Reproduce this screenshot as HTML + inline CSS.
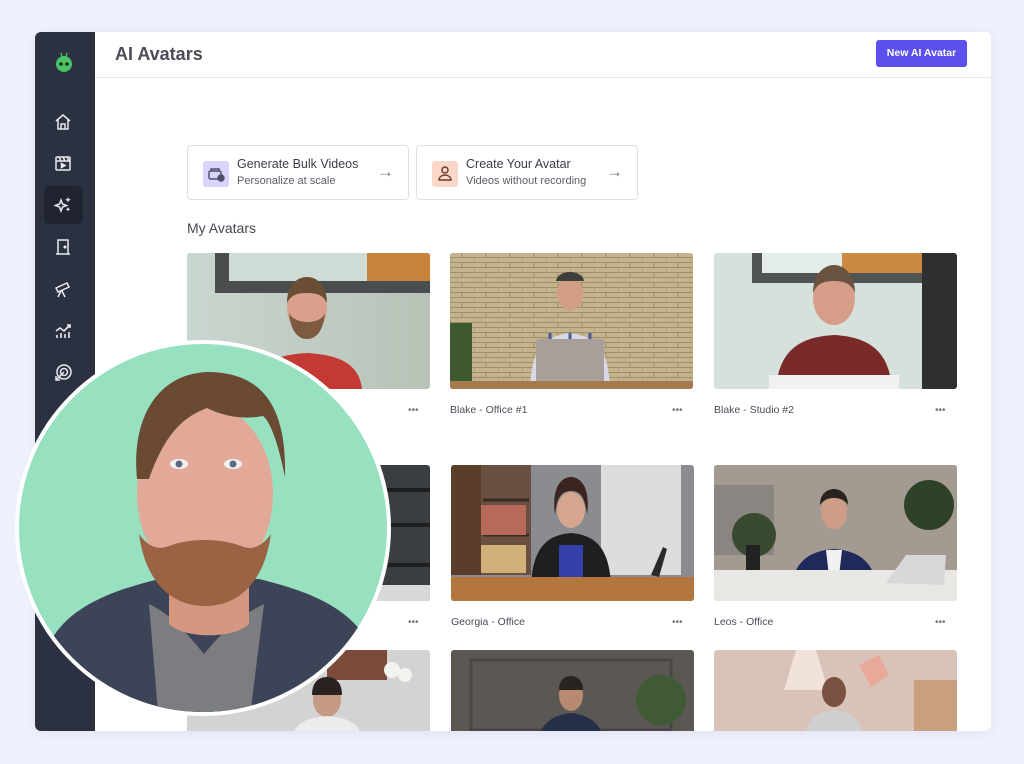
<!DOCTYPE html>
<html><head><meta charset="utf-8"><style>
*{margin:0;padding:0;box-sizing:border-box}
body{width:1024px;height:764px;background:#eef0fb;font-family:"Liberation Sans",sans-serif;position:relative;overflow:hidden}
.card{position:absolute;left:35px;top:32px;width:956px;height:699px;background:#fff;border-radius:6px;overflow:hidden;box-shadow:0 2px 10px rgba(80,90,140,.08)}
.side{position:absolute;left:0;top:0;width:60px;height:100%;background:#2b3140}
.hdr{position:absolute;left:60px;top:0;right:0;height:46px;border-bottom:1px solid #e6e7ec}
.hdr h1{position:absolute;left:20px;top:12px;font-size:18px;font-weight:bold;color:#4a4d57}
.btn{position:absolute;right:24px;top:8px;width:91px;height:27px;background:#5b4fee;border-radius:3px;color:#fff;font-size:10.5px;font-weight:bold;text-align:center;line-height:27px}
.ic{position:absolute;left:18px;width:20px;height:20px}
.act{position:absolute;left:9px;top:154px;width:39px;height:38px;background:#1f2430;border-radius:5px}
.qa{position:absolute;top:113px;width:222px;height:55px;border:1px solid #dfe0e6;border-radius:4px;background:#fff}
.qa .b{position:absolute;left:15px;top:15px;width:26px;height:26px;border-radius:3px}
.qa .t{position:absolute;left:49px;top:11px;font-size:12.5px;color:#3b3e48}
.qa .s{position:absolute;left:49px;top:29px;font-size:11px;color:#5b5e68}
.qa .ar{position:absolute;right:14px;top:16px;font-size:17px;color:#777}
.my{position:absolute;left:152px;top:188px;font-size:14px;color:#44474f}
.th{position:absolute;width:243px;height:136px;border-radius:3px;overflow:hidden}
.lb{position:absolute;font-size:10.5px;color:#4a4d57}
.dots{position:absolute;font-size:10px;color:#777;letter-spacing:0px}
.circ{position:absolute;left:15px;top:340px;width:376px;height:376px;border-radius:50%;background:#fff;padding:4px}
.circ>div{width:100%;height:100%;border-radius:50%;background:#97e1c1;overflow:hidden;position:relative}
</style></head><body>
<div class="card">
 <div class="side">
  <svg class="ic" style="left:17px;top:19px;width:24px;height:24px" viewBox="0 0 24 24"><line x1="9" y1="2" x2="10" y2="6" stroke="#4cc265" stroke-width="1.5"/><line x1="15" y1="2" x2="14" y2="6" stroke="#4cc265" stroke-width="1.5"/><circle cx="12" cy="13" r="8" fill="#49c463"/><circle cx="9" cy="13" r="1.8" fill="#222"/><circle cx="15" cy="13" r="1.8" fill="#222"/></svg>
  <svg class="ic" style="top:80px" viewBox="0 0 20 20" fill="none" stroke="#e8eaf0" stroke-width="1.5"><path d="M3 9l7-6 7 6M5 8v9h10V8M8 17v-5h4v5"/></svg>
  <svg class="ic" style="top:121px" viewBox="0 0 20 20" fill="none" stroke="#e8eaf0" stroke-width="1.5"><rect x="3" y="4" width="14" height="13" rx="1"/><line x1="3" y1="8" x2="17" y2="8"/><path d="M6 4l2 4M10 4l2 4M14 4l2 4"/><path d="M8.5 10.5v4l3.5-2z" fill="#e8eaf0"/></svg>
  <div class="act"></div>
  <svg class="ic" style="top:163px" viewBox="0 0 20 20" fill="#e8eaf0"><path d="M8 5l1.5 4 4 1.5-4 1.5L8 16l-1.5-4-4-1.5 4-1.5z" fill="none" stroke="#e8eaf0" stroke-width="1.5"/><path d="M15 2l.8 2 2 .8-2 .8-.8 2-.8-2-2-.8 2-.8zM15 12l.7 1.6 1.6.7-1.6.7-.7 1.6-.7-1.6-1.6-.7 1.6-.7z"/></svg>
  <svg class="ic" style="top:205px" viewBox="0 0 20 20" fill="none" stroke="#e8eaf0" stroke-width="1.5"><path d="M5 17V3h10v14M3 17h14"/><circle cx="12" cy="10" r=".8" fill="#e8eaf0"/></svg>
  <svg class="ic" style="top:247px" viewBox="0 0 20 20" fill="none" stroke="#e8eaf0" stroke-width="1.5"><path d="M3 9l11-5 2 4-11 5zM8 12l-3 6M9 12l3 6"/></svg>
  <svg class="ic" style="top:289px" viewBox="0 0 20 20" fill="none" stroke="#e8eaf0" stroke-width="1.6"><path d="M3 10l4-3 4 3 6-6M14 4h3v3M4 17v-3M8 17v-5M12 17v-4M16 17v-6"/></svg>
  <svg class="ic" style="top:331px" viewBox="0 0 20 20" fill="none" stroke="#e8eaf0" stroke-width="1.5"><circle cx="11" cy="9" r="7"/><circle cx="11" cy="9" r="3.5"/><path d="M11 9L3 17M3 13v4h4"/></svg>
 </div>
 <div class="hdr"><h1>AI Avatars</h1><div class="btn">New AI Avatar</div></div>
 <div class="qa" style="left:152px"><div class="b" style="background:#d9d4fb"><svg width="26" height="26" viewBox="0 0 26 26" fill="none" stroke="#4a4f6a" stroke-width="1.4"><rect x="6" y="10" width="12" height="8" rx="1.5"/><path d="M8 10V8h8v2"/><circle cx="18" cy="17" r="3" fill="#4a4f6a"/></svg></div><div class="t">Generate Bulk Videos</div><div class="s">Personalize at scale</div><div class="ar">→</div></div>
 <div class="qa" style="left:381px"><div class="b" style="background:#fbd7c8"><svg width="26" height="26" viewBox="0 0 26 26" fill="none" stroke="#6a3a2c" stroke-width="1.4"><circle cx="13" cy="9" r="3"/><path d="M7 19c0-3 3-5 6-5s6 2 6 5z"/></svg></div><div class="t">Create Your Avatar</div><div class="s">Videos without recording</div><div class="ar">→</div></div>
 <div class="my">My Avatars</div>

 <div class="th" style="left:152px;top:221px;background:linear-gradient(90deg,#c9d6cf,#b8c2b7)"><svg width="243" height="136"><rect x="28" y="0" width="215" height="40" fill="#4a4d4e"/><rect x="42" y="0" width="138" height="28" fill="#cfdcd6"/><rect x="180" y="0" width="63" height="28" fill="#c9823a"/><path d="M65 136c3-25 22-34 55-36 33 2 52 11 55 36z" fill="#c23a33"/><ellipse cx="120" cy="55" rx="20" ry="26" fill="#d9a08e"/><path d="M100 50c0-18 10-26 20-26s20 8 20 26c-4-8-10-10-20-10s-16 2-20 10z" fill="#6b4e36"/><path d="M102 60c2 20 10 26 18 26s16-6 18-26c-4 12-30 12-36 0z" fill="#7d5a40"/></svg></div>
 <div class="th" style="left:415px;top:221px;background:#b8a883"><svg width="243" height="136"><defs><pattern id="br" width="24" height="10" patternUnits="userSpaceOnUse"><rect width="24" height="10" fill="#c4b48e"/><path d="M0 9.5h24M12 0v5M0 5v5M0 4.5h24" stroke="#9e8e6a" stroke-width="1"/></pattern></defs><rect width="243" height="136" fill="url(#br)"/><rect x="0" y="70" width="22" height="66" fill="#3f5a30"/><path d="M80 136c2-45 15-52 40-56 25 4 38 11 40 56z" fill="#d8d8e6"/><path d="M90 90h60M88 105h64M100 80v56M120 80v56M140 80v56" stroke="#4a5a9a" stroke-width="3"/><ellipse cx="120" cy="40" rx="13" ry="17" fill="#d29e86"/><path d="M106 28c2-12 26-12 28 0z" fill="#3e3e3a"/><rect x="86" y="86" width="68" height="46" rx="3" fill="#a89e9a"/><rect x="0" y="128" width="243" height="8" fill="#a57a4e"/></svg></div>
 <div class="th" style="left:679px;top:221px;background:#d6e1dc"><svg width="243" height="136"><rect x="38" y="0" width="170" height="30" fill="#505455"/><rect x="48" y="0" width="80" height="20" fill="#e3ece8"/><rect x="128" y="0" width="80" height="20" fill="#cc8a40"/><rect x="208" y="0" width="35" height="136" fill="#2e2f30"/><path d="M62 136c3-40 25-52 58-54 33 2 55 14 58 54z" fill="#7a2a28"/><ellipse cx="120" cy="45" rx="21" ry="27" fill="#d69d8a"/><path d="M99 40c0-20 12-28 21-28s21 8 21 28c-4-10-12-12-21-12s-17 2-21 12z" fill="#6a5340"/><rect x="55" y="122" width="130" height="14" fill="#f1f1f1"/></svg></div>
 <div class="lb" style="left:415px;top:372px">Blake - Office #1</div><div class="dots" style="left:637px;top:373px">•••</div>
 <div class="lb" style="left:679px;top:372px">Blake - Studio #2</div><div class="dots" style="left:900px;top:373px">•••</div>
 <div class="dots" style="left:373px;top:373px">•••</div>

 <div class="th" style="left:152px;top:433px;background:#3b3e40"><svg width="243" height="136"><path d="M190 0v136M200 60h43M200 25h43M200 100h43" stroke="#1d1e20" stroke-width="4"/><rect x="0" y="120" width="243" height="16" fill="#d8d8d8"/></svg></div>
 <div class="th" style="left:416px;top:433px;background:#8a8c8f"><svg width="243" height="136"><rect x="0" y="0" width="30" height="110" fill="#5a3e2a"/><rect x="30" y="0" width="50" height="110" fill="#6a5040"/><path d="M32 35h46M32 70h46" stroke="#3a2a20" stroke-width="3"/><rect x="30" y="40" width="45" height="30" fill="#b86a5a"/><rect x="30" y="80" width="45" height="28" fill="#d2b07a"/><rect x="150" y="0" width="80" height="110" fill="#dcdedb"/><path d="M80 120c2-40 18-50 40-52 22 2 38 12 40 52z" fill="#1f1f22"/><path d="M108 80h24v40h-24z" fill="#3440a8"/><ellipse cx="120" cy="45" rx="14" ry="18" fill="#d6a690"/><path d="M104 50c-4-30 8-38 16-38s20 8 16 38c-2-20-8-24-16-24s-14 4-16 24z" fill="#3a2520"/><rect x="0" y="112" width="243" height="24" fill="#b3763f"/><path d="M200 110l12-28 4 2-8 28z" fill="#2a2a2c"/></svg></div>
 <div class="th" style="left:679px;top:433px;background:#a59e97"><svg width="243" height="136"><path d="M0 0h243v136H0z" fill="#a39b92"/><rect x="0" y="20" width="60" height="70" fill="#8a8580"/><circle cx="40" cy="70" r="22" fill="#3a4a30"/><rect x="32" y="80" width="14" height="30" fill="#222"/><circle cx="215" cy="40" r="25" fill="#2f4228"/><path d="M75 136c2-40 20-50 45-52 25 2 43 12 45 52z" fill="#1f2a5a"/><path d="M112 85h16l-4 35h-8z" fill="#f1f1f1"/><ellipse cx="120" cy="47" rx="13" ry="17" fill="#cf9d86"/><path d="M106 40c0-12 8-16 14-16s14 4 14 16c-4-6-10-7-14-7s-10 1-14 7z" fill="#2a2420"/><rect x="0" y="105" width="243" height="31" fill="#e9e7e4"/><path d="M172 118l20-28h40l-2 30z" fill="#d8d8da"/></svg></div>
 <div class="lb" style="left:416px;top:584px">Georgia - Office</div><div class="dots" style="left:637px;top:585px">•••</div>
 <div class="lb" style="left:679px;top:584px">Leos - Office</div><div class="dots" style="left:900px;top:585px">•••</div>
 <div class="dots" style="left:373px;top:585px">•••</div>

 <div class="th" style="left:152px;top:618px;background:#d3d3d3"><svg width="243" height="136"><rect x="140" y="0" width="60" height="30" fill="#7a4a3a"/><circle cx="205" cy="20" r="8" fill="#f2f2ee"/><circle cx="218" cy="25" r="7" fill="#f2f2ee"/><ellipse cx="140" cy="50" rx="14" ry="17" fill="#c59a85"/><path d="M125 45c0-12 6-18 15-18s15 6 15 18z" fill="#2a2220"/><path d="M105 90c2-18 15-22 35-24 20 2 33 6 35 24z" fill="#ececec"/></svg></div>
 <div class="th" style="left:416px;top:618px;background:#5b5753"><svg width="243" height="136"><rect x="20" y="10" width="200" height="70" fill="none" stroke="#4a4643" stroke-width="3"/><ellipse cx="120" cy="45" rx="12" ry="16" fill="#b88a72"/><path d="M108 40c0-10 6-14 12-14s12 4 12 14z" fill="#2a2420"/><path d="M85 100c2-25 15-35 35-37 20 2 33 12 35 37z" fill="#27304a"/><circle cx="210" cy="50" r="25" fill="#3f5a35"/></svg></div>
 <div class="th" style="left:679px;top:618px;background:#d9c3b8"><svg width="243" height="136"><path d="M70 40l12-40h20l12 40z" fill="#f1e3d9"/><path d="M145 15l20-10 10 20-18 12z" fill="#e9a89a"/><rect x="200" y="30" width="43" height="60" fill="#c9a07e"/><ellipse cx="120" cy="42" rx="12" ry="15" fill="#7a5040"/><path d="M90 90c2-20 12-28 30-30 18 2 28 10 30 30z" fill="#cfcfcf"/></svg></div>
</div>
<div class="circ"><div><svg width="368" height="368" viewBox="0 0 368 368"><path d="M30 300c20-40 70-55 110-65h100c40 10 90 25 110 65v80H30z" fill="#3e4458"/><path d="M130 260c20 10 30 20 55 50 25-30 40-40 60-50l-15 120h-90z" fill="#7c7d80"/><path d="M150 240h80v40c-15 15-65 15-80 0z" fill="#d49880"/><ellipse cx="186" cy="150" rx="68" ry="90" fill="#e2a898"/><path d="M118 135c-6-60 20-105 70-107 52 0 80 30 78 105-6-30-14-55-22-61-20 4-40 0-56-8-20 8-40 20-58 71z" fill="#6a4a32"/><path d="M120 190c6 45 30 72 66 72s60-27 66-72c-10 14-20 16-30 12-20-8-52-8-72 0-10 4-20 2-30-12z" fill="#9a6444"/><ellipse cx="160" cy="120" rx="9" ry="5" fill="#f2f2f2"/><ellipse cx="214" cy="120" rx="9" ry="5" fill="#f2f2f2"/><circle cx="160" cy="120" r="3.5" fill="#5a6b80"/><circle cx="214" cy="120" r="3.5" fill="#5a6b80"/></svg></div></div>
</body></html>
